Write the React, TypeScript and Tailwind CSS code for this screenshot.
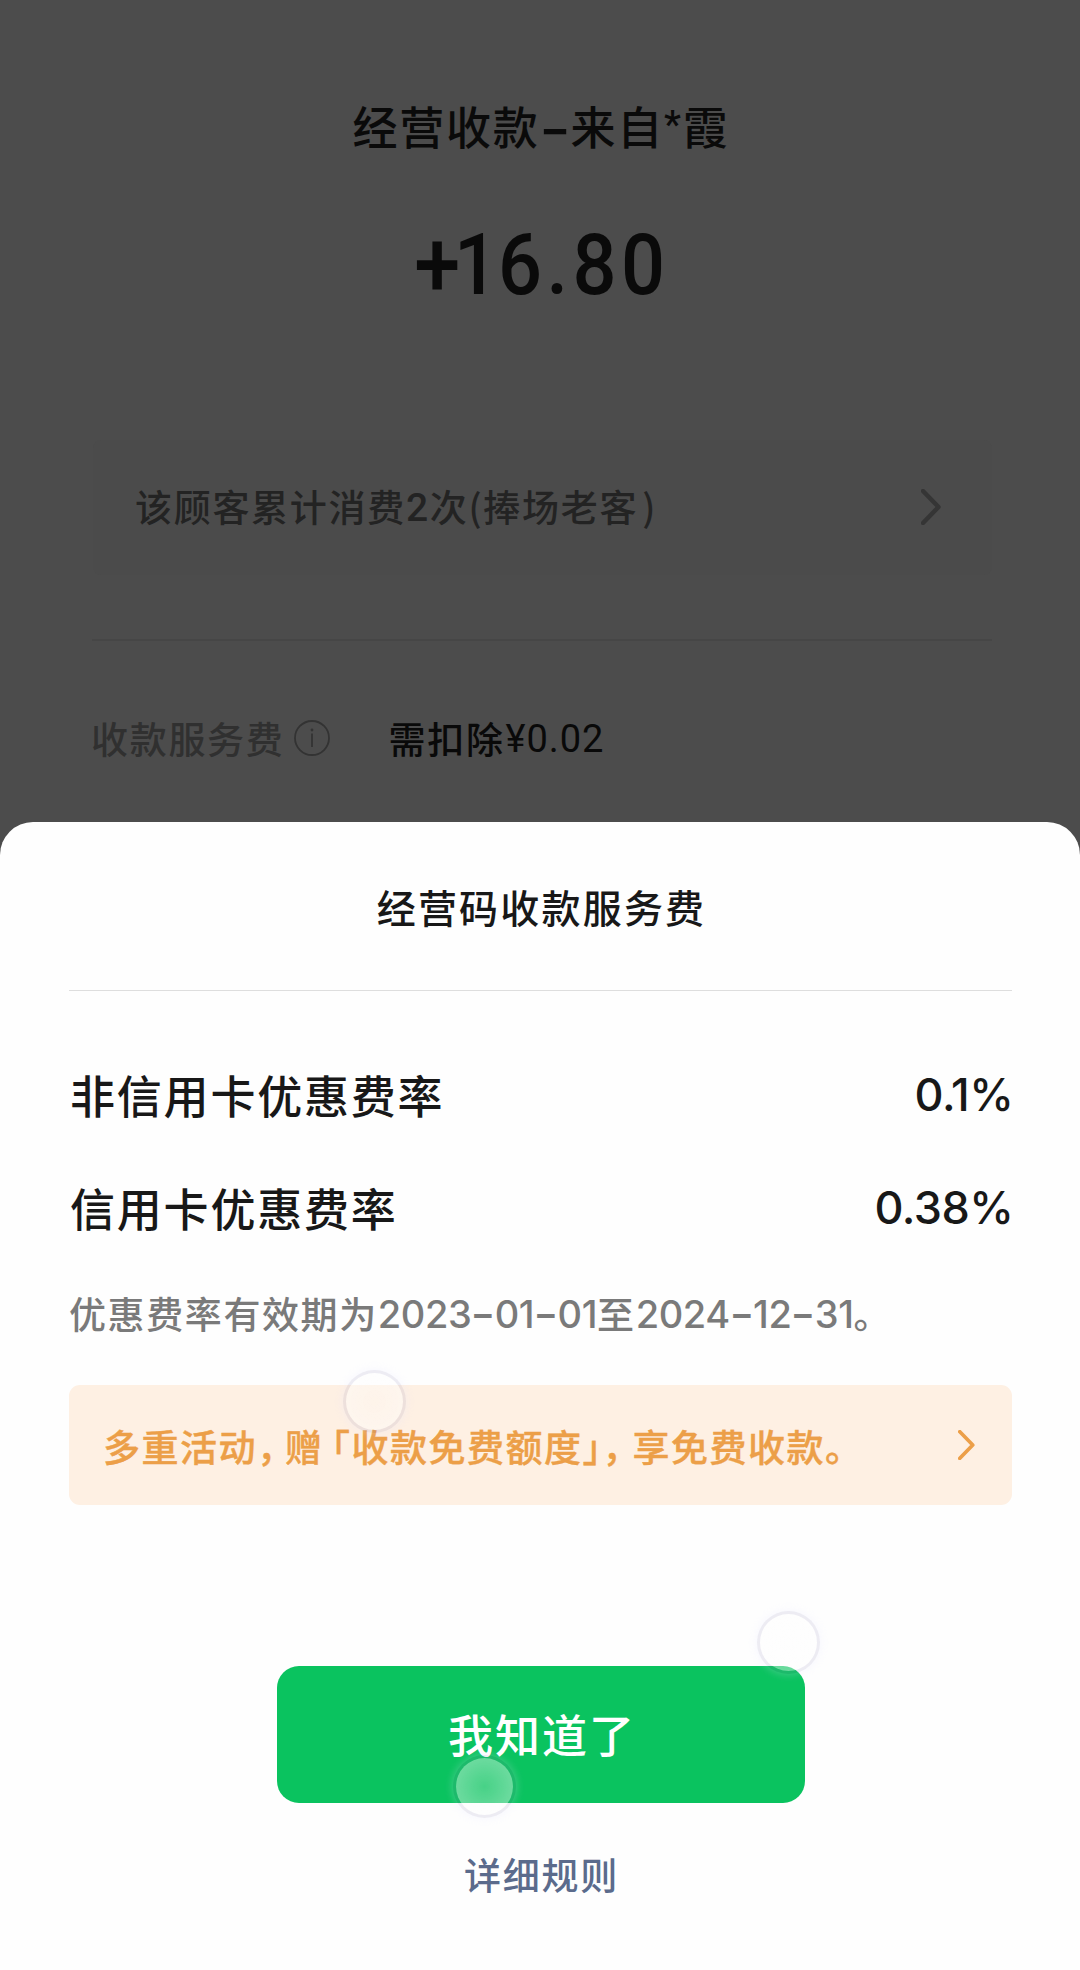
import React from "react";

const rates = [
  { label: "非信用卡优惠费率", value: "0.1" },
  { label: "信用卡优惠费率", value: "0.38" },
];

// Soft translucent touch bubbles floating above the sheet
const bubbles = [
  { left: 343, top: 1370 },
  { left: 757, top: 1611 },
  { left: 453, top: 1755 },
];

const Chevron = ({ className }: { className: string }) => (
  <svg
    viewBox="0 0 20 36"
    fill="none"
    stroke="currentColor"
    strokeLinecap="round"
    strokeLinejoin="round"
    className={className}
  >
    <path d="M2 2 L17.5 18 L2 34" strokeWidth="4.4" />
  </svg>
);

const InfoIcon = () => (
  <svg
    viewBox="0 0 36 36"
    fill="none"
    stroke="currentColor"
    className="ml-[9px] h-9 w-9 text-[#333333]"
  >
    <circle cx="18" cy="18" r="17" strokeWidth="1.8" />
    <path d="M18 13.5 V27" strokeWidth="1.8" />
    <circle cx="18" cy="10" r="1.4" fill="currentColor" stroke="none" />
  </svg>
);

// Date with short, heavy dashes between its parts
const DateText = ({ value }: { value: string }) => (
  <span className="relative -top-px font-['Inter',sans-serif] text-[38px] leading-none tracking-[-0.4px]">
    {value.split("-").map((part, i) => (
      <React.Fragment key={i}>
        {i > 0 && (
          <span className="mx-[1px] inline-block scale-x-140 px-[2px] font-semibold">-</span>
        )}
        {part}
      </React.Fragment>
    ))}
  </span>
);

const App = () => {
  return (
    <div className="relative h-[1970px] w-[1080px] overflow-hidden bg-[#4c4c4c] font-['Noto_Sans_CJK_SC',sans-serif] font-medium">
      {/* Dimmed bill page */}
      <div className="flex h-[822px] flex-col pt-[94px]">
        <h1 className="pl-[2px] text-center text-[45px] leading-[64px] tracking-[1.8px] text-[#0a0a0a]">
          经营收款
          <span className="mr-[3px] ml-[5px] inline-block scale-x-150 font-['Inter',sans-serif] leading-none font-bold">
            -
          </span>
          来自
          <span className="relative -top-[7px] font-['Roboto',sans-serif] text-[38px] leading-none">
            *
          </span>
          霞
        </h1>
        <div className="mt-[57px] flex scale-x-90 justify-center pl-[4px] font-['Roboto',sans-serif] text-[86px] leading-[100px] tracking-[5px] text-[#0a0a0a]">
          <span className="-mr-[2px] text-[92px] tracking-[-5px]">+</span>
          <span>
            <span className="tracking-[0px]">1</span>6.80
          </span>
        </div>

        <div className="mt-[125px] mr-[88px] ml-[93px] flex h-[135px] items-center justify-between rounded-lg bg-[#4b4b4b] pr-[51px] pb-[2px] pl-[42px] text-[#232323]">
          <span className="mb-[2px] text-[37px] leading-[50px] tracking-[1.7px]">
            该顾客累计消费
            <span className="relative -top-px font-['Roboto',sans-serif] text-[39px] leading-none">2</span>
            次(捧场老客<span className="ml-[4px]">)</span>
          </span>
          <Chevron className="h-9 w-5 text-[#353535]" />
        </div>

        <div className="mt-[64px] mr-[88px] ml-[92px] h-[2px] bg-[#464646]" />

        <div className="mt-[72px] flex h-[50px] items-center pl-[91px] text-[37px] leading-[50px] tracking-[1.7px]">
          <span className="text-[#303030]">收款服务费</span>
          <InfoIcon />
          <span className="ml-[59px] text-[#090909]">
            需扣除
            <span className="relative -top-[2px] ml-[1px] font-['Roboto',sans-serif] text-[38px] leading-none font-normal tracking-[0.9px]">
              ¥0.02
            </span>
          </span>
        </div>
      </div>

      {/* Bottom sheet */}
      <div className="flex h-[1148px] flex-col rounded-t-[33px] bg-[#fefefe] pt-[54px] pr-[68px] pl-[69px] text-[#181818]">
        <h2 className="pl-[2px] text-center text-[39px] leading-[60px] tracking-[2.2px]">
          经营码收款服务费
        </h2>
        <div className="mt-[54px] h-px bg-[#dedede]" />

        <div className="mt-[74px] flex flex-col gap-[53px]">
          {rates.map((rate) => (
            <div
              key={rate.label}
              className="flex h-[60px] items-center justify-between text-[45px] leading-[60px] tracking-[1.8px]"
            >
              <span className="pl-[1px]">{rate.label}</span>
              <span className="font-['Inter',sans-serif] tracking-[-0.5px]">
                {rate.value}
                <span className="tracking-[-2px]">%</span>
              </span>
            </div>
          ))}
        </div>

        <p className="mt-[50px] h-[50px] text-[37px] leading-[50px] tracking-[1.6px] whitespace-nowrap text-[#7a7a7a]">
          优惠费率有效期为
          <DateText value="2023-01-01" />
          至
          <DateText value="2024-12-31" />。
        </p>

        <div className="mt-[47px] flex h-[120px] items-center justify-between rounded-[11px] bg-[#fef0e3] pr-[37px] pl-[34px] text-[#ec9f48]">
          <span className="pt-[1px] text-[37px] leading-[50px] tracking-[1.5px] whitespace-nowrap [-webkit-text-stroke:0.4px] [text-spacing-trim:space-all]">
            多重活动
            <span className="mr-[8px] [font-feature-settings:'halt']">，</span>赠
            <span className="ml-[8px] [font-feature-settings:'halt']">「</span>
            收款免费额度
            <span className="[font-feature-settings:'halt']">」</span>
            <span className="mr-[10px] [font-feature-settings:'halt']">，</span>
            享免费收款。
          </span>
          <Chevron className="h-[30px] w-[17px]" />
        </div>

        <button className="mt-[161px] h-[137px] w-[528px] self-center rounded-[22px] bg-[#0ac35f] pb-px pl-[3px] text-[45px] tracking-[2px] text-white">
          我知道了
        </button>
        <a className="mt-[46px] pl-[2px] text-center text-[37px] leading-[50px] tracking-[1.7px] text-[#5b6b8c]">
          详细规则
        </a>
      </div>

      {bubbles.map((b) => (
        <div
          key={b.left}
          style={{ left: b.left, top: b.top }}
          className="absolute h-[63px] w-[63px] rounded-full border-[3px] border-[#8a86b4]/15 bg-[radial-gradient(circle,rgba(255,255,255,0.25),rgba(255,255,255,0.4)_70%)] bg-clip-padding shadow-[0_0_10px_rgba(225,225,255,0.3)]"
        />
      ))}
    </div>
  );
};

export default App;
